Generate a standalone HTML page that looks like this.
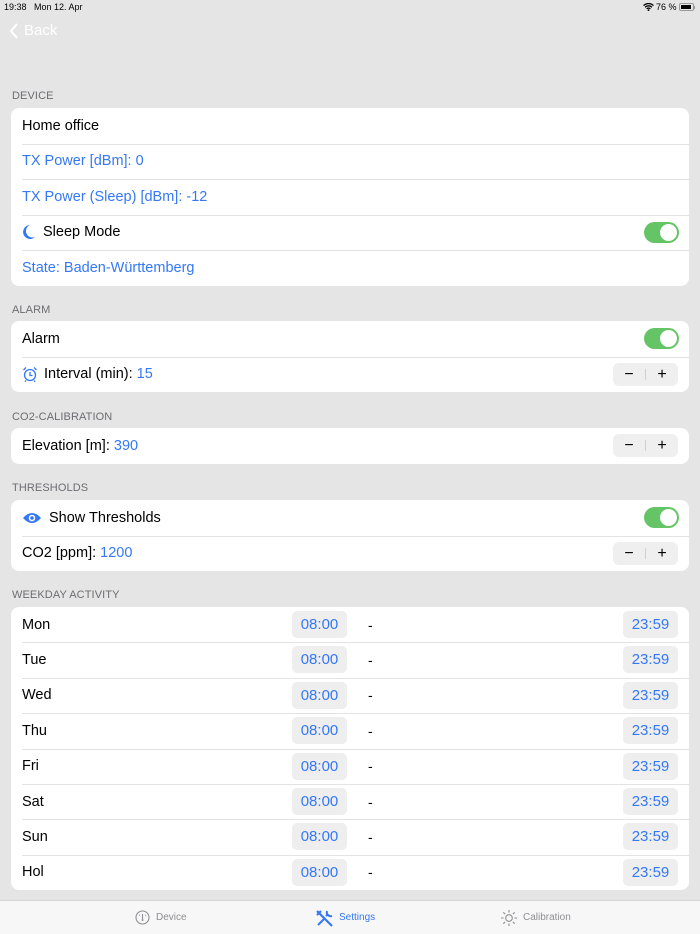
<!DOCTYPE html>
<html><head><meta charset="utf-8"><style>
*{margin:0;padding:0;box-sizing:border-box}
body{width:700px;height:934px;background:#e5e5e5;font-family:"Liberation Sans",sans-serif;position:relative;overflow:hidden;color:#000}
.abs{position:absolute}
.sb{font-size:9px;top:2px}
.hdr{position:absolute;left:12px;font-size:11px;color:#6d6d72;letter-spacing:.1px}
.card{position:absolute;left:11px;width:678px;background:#fff;border-radius:8px;overflow:hidden}
.row{position:relative;height:35.5px;display:flex;align-items:center;padding-left:11px;font-size:14.5px}
.row+.row:before{content:"";position:absolute;top:0;left:11px;right:0;border-top:1px solid #e3e3e6}
.blue{color:#3478f6}
.tog{position:absolute;right:10px;top:7px;width:35px;height:21px;border-radius:11px;background:#65c466}
.tog:after{content:"";position:absolute;right:2px;top:2px;width:17px;height:17px;border-radius:50%;background:#fff}
.step{position:absolute;right:11px;top:6px;width:65px;height:23px;background:#efeff0;border-radius:6px;font-size:16px}
.step span{position:absolute;top:0;width:32px;height:23px;line-height:23px;text-align:center}
.step i{position:absolute;left:32px;top:6px;height:11px;border-left:1px solid #d0d0d0}
.tb{position:absolute;top:4px;width:55px;height:27px;background:#eeeeef;border-radius:5px;color:#3478f6;font-size:15px;text-align:center;line-height:27px}
.dash{position:absolute;left:357px;font-size:14px}
.tab{position:absolute;top:900px;left:0;width:700px;height:34px;background:#f7f7f7;border-top:1px solid #d6d6d6}
.tab div{position:absolute;top:11px;font-size:10px;color:#8e8e93}
</style></head><body>
<div class="abs sb" style="left:4px">19:38&nbsp;&nbsp; Mon 12. Apr</div>
<div class="abs sb" style="left:656px">76 %</div>
<svg class="abs" style="left:643px;top:3px" width="11" height="8" viewBox="0 0 11 8"><path d="M0.5 2.5Q5.5-1.5 10.5 2.5M2 4.2Q5.5 1.5 9 4.2M3.6 5.8Q5.5 4.4 7.4 5.8" stroke="#000" stroke-width="1.3" fill="none"/><circle cx="5.5" cy="7.2" r=".9"/></svg>
<div class="abs" style="left:679px;top:3px;width:15px;height:8px;border:1px solid #999;border-radius:2px"><div style="margin:1px;width:10px;height:4px;background:#000"></div></div>
<div class="abs" style="left:694px;top:6px;width:1px;height:3px;background:#999"></div>
<svg class="abs" style="left:9px;top:23px" width="10" height="16" viewBox="0 0 10 16"><path d="M8 1L2 8l6 7" stroke="#fff" stroke-width="2" fill="none"/></svg>
<div class="abs" style="left:24px;top:22px;font-size:15px;color:#fff">Back</div>

<div class="hdr" style="top:90px">DEVICE</div>
<div class="card" style="top:108px">
<div class="row">Home office</div>
<div class="row blue">TX Power [dBm]: 0</div>
<div class="row blue">TX Power (Sleep) [dBm]: -12</div>
<div class="row"><svg width="14" height="16" viewBox="0 0 14 16" style="margin-right:7px"><path d="M8 1A7 7 0 1 0 13 13A6 6 0 0 1 8 1Z" fill="#3478f6"/></svg>Sleep Mode<div class="tog"></div></div>
<div class="row blue">State: Baden-Württemberg</div>
</div>

<div class="hdr" style="top:304px">ALARM</div>
<div class="card" style="top:321px">
<div class="row">Alarm<div class="tog"></div></div>
<div class="row"><svg width="16" height="16" viewBox="0 0 16 16" style="margin-right:6px"><circle cx="8" cy="9" r="5.5" stroke="#3478f6" stroke-width="1.3" fill="none"/><path d="M8 6v3.5h2.5M1.5 4L4 1.5M14.5 4L12 1.5M4 14.5l-1 1.3M12 14.5l1 1.3" stroke="#3478f6" stroke-width="1.3" fill="none"/></svg>Interval (min):&nbsp;<span class="blue">15</span><div class="step"><span style="left:0">−</span><i></i><span style="left:33px">+</span></div></div>
</div>

<div class="hdr" style="top:411px">CO2-CALIBRATION</div>
<div class="card" style="top:428px">
<div class="row">Elevation [m]:&nbsp;<span class="blue">390</span><div class="step"><span style="left:0">−</span><i></i><span style="left:33px">+</span></div></div>
</div>

<div class="hdr" style="top:482px">THRESHOLDS</div>
<div class="card" style="top:500px">
<div class="row"><svg width="20" height="14" viewBox="0 0 20 14" style="margin-right:7px"><path d="M1 7Q10-3 19 7Q10 17 1 7Z" fill="#3478f6"/><circle cx="10" cy="7" r="3.3" fill="#fff"/><circle cx="10" cy="7" r="1.8" fill="#3478f6"/></svg>Show Thresholds<div class="tog"></div></div>
<div class="row">CO2 [ppm]:&nbsp;<span class="blue">1200</span><div class="step"><span style="left:0">−</span><i></i><span style="left:33px">+</span></div></div>
</div>

<div class="hdr" style="top:589px">WEEKDAY ACTIVITY</div>
<div class="card" style="top:607px">
<div class="row" style="height:35.4px">Mon<div class="tb" style="left:281px">08:00</div><div class="dash">-</div><div class="tb" style="left:612px">23:59</div></div>
<div class="row" style="height:35.4px">Tue<div class="tb" style="left:281px">08:00</div><div class="dash">-</div><div class="tb" style="left:612px">23:59</div></div>
<div class="row" style="height:35.4px">Wed<div class="tb" style="left:281px">08:00</div><div class="dash">-</div><div class="tb" style="left:612px">23:59</div></div>
<div class="row" style="height:35.4px">Thu<div class="tb" style="left:281px">08:00</div><div class="dash">-</div><div class="tb" style="left:612px">23:59</div></div>
<div class="row" style="height:35.4px">Fri<div class="tb" style="left:281px">08:00</div><div class="dash">-</div><div class="tb" style="left:612px">23:59</div></div>
<div class="row" style="height:35.4px">Sat<div class="tb" style="left:281px">08:00</div><div class="dash">-</div><div class="tb" style="left:612px">23:59</div></div>
<div class="row" style="height:35.4px">Sun<div class="tb" style="left:281px">08:00</div><div class="dash">-</div><div class="tb" style="left:612px">23:59</div></div>
<div class="row" style="height:35.4px">Hol<div class="tb" style="left:281px">08:00</div><div class="dash">-</div><div class="tb" style="left:612px">23:59</div></div>
</div>

<div class="tab">
<svg class="abs" style="left:135px;top:9px" width="15" height="15" viewBox="0 0 15 15"><circle cx="7.5" cy="7.5" r="6.5" stroke="#8e8e93" stroke-width="1.1" fill="none"/><path d="M7.5 4v5M4 5l.7.5M11 5l-.7.5" stroke="#8e8e93" stroke-width="1.1"/><circle cx="7.5" cy="10" r="1" fill="#8e8e93"/></svg>
<div style="left:156px">Device</div>
<svg class="abs" style="left:315px;top:8px" width="19" height="19" viewBox="0 0 19 19"><path d="M2 2l15 15M2 6l4-4M13 5l-2 2" stroke="#3478f6" stroke-width="2.2" fill="none"/><path d="M3 16l6-6M12 2a4 4 0 0 0 5 5" stroke="#3478f6" stroke-width="2" fill="none"/></svg>
<div style="left:339px;color:#3478f6">Settings</div>
<svg class="abs" style="left:501px;top:9px" width="16" height="16" viewBox="0 0 16 16"><circle cx="8" cy="8" r="3.3" stroke="#8e8e93" stroke-width="1.1" fill="none"/><path d="M8 0v2.5M8 13.5V16M0 8h2.5M13.5 8H16M2.3 2.3l1.8 1.8M11.9 11.9l1.8 1.8M2.3 13.7l1.8-1.8M11.9 4.1l1.8-1.8" stroke="#8e8e93" stroke-width="1.1"/></svg>
<div style="left:523px">Calibration</div>
</div>
</body></html>
